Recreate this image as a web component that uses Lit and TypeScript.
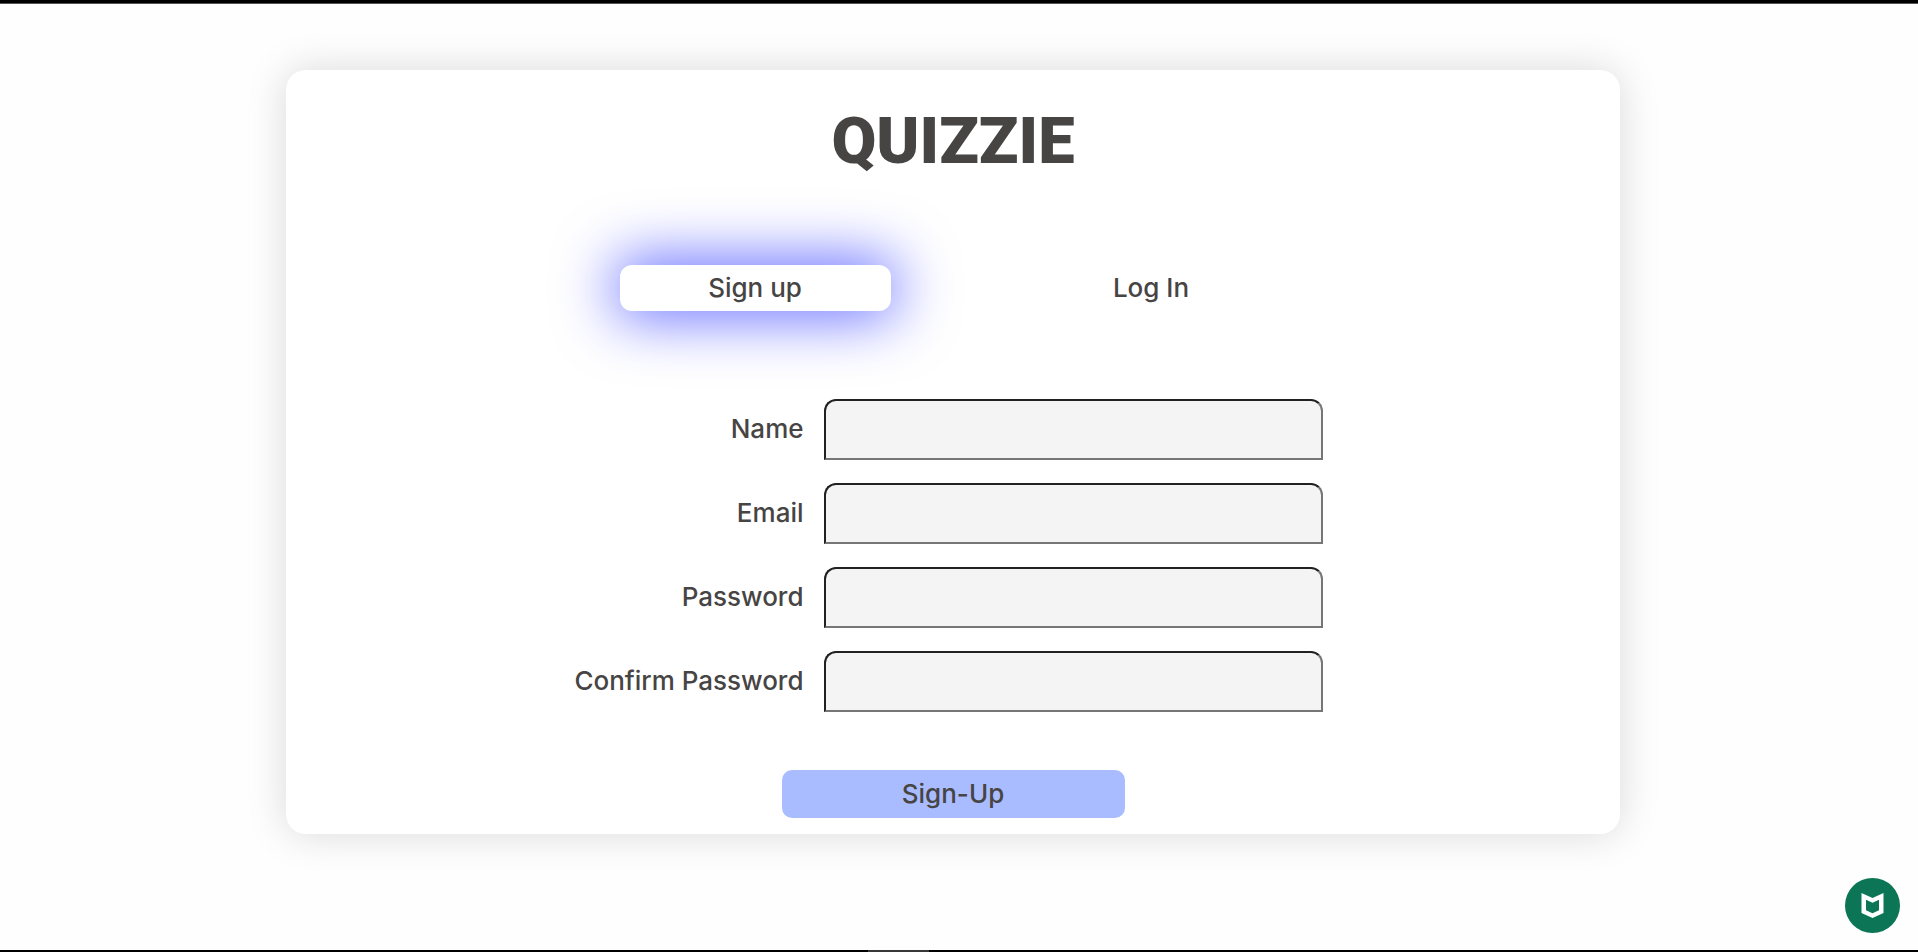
import { LitElement, html, css } from "lit";
import { customElement, state } from "lit/decorators.js";

interface Field {
  id: string;
  label: string;
  type: string;
}

const FIELDS: Field[] = [
  { id: "name", label: "Name", type: "text" },
  { id: "email", label: "Email", type: "email" },
  { id: "password", label: "Password", type: "password" },
  { id: "confirm", label: "Confirm Password", type: "password" },
];

@customElement("shield-button")
export class ShieldButton extends LitElement {
  static styles = css`
    .shield {
      display: block;
      width: 55px;
      height: 55px;
      padding: 0;
      border: 0;
      border-radius: 50%;
      background: #0b7556;
      cursor: pointer;
    }
    .shield svg {
      display: block;
      width: 55px;
      height: 55px;
    }
  `;

  render() {
    return html`
      <button class="shield" type="button" aria-label="Web protection">
        <svg viewBox="0 0 55 55" aria-hidden="true">
          <path
            fill="#fff"
            fill-rule="evenodd"
            d="M16.5 15 L27.5 20 L38.5 15 V35 L27.5 40 L16.5 35 Z M21 21.8 V32.2 L27.5 35.2 L34 32.2 V21.8 L27.5 24.8 Z"
          />
        </svg>
      </button>
    `;
  }
}

@customElement("app-root")
export class AppRoot extends LitElement {
  @state() private mode: "signup" | "login" = "signup";

  static styles = css`
    :host {
      display: flex;
      flex-direction: column;
      position: relative;
      box-sizing: border-box;
      min-height: 100vh;
      background: #fefefe;
      color: #474444;
      font-family: Inter, "Open Sans", sans-serif;
      font-size: 26px;
      font-weight: 500;
      line-height: 40px;
    }
    .top-bar {
      height: 3px;
      background: #000;
      border-bottom: 1px solid #555;
    }
    .page {
      flex: 1;
      padding: 66px 12px 0 0;
    }
    .card {
      box-sizing: border-box;
      width: 70%;
      margin: 0 auto;
      padding: 31px 16px 16px;
      display: flex;
      flex-direction: column;
      align-items: center;
      border-radius: 20px;
      background: #fff;
      box-shadow: 0 0 40px rgba(0, 0, 0, 0.15);
    }
    .title {
      margin: 0;
      font-family: Roboto, sans-serif;
      font-size: 65px;
      font-weight: 900;
      line-height: 80px;
    }
    .tabs {
      display: flex;
      gap: 125px;
      margin-top: 84px;
    }
    .tab {
      width: 271px;
      height: 46px;
      padding: 0;
      border: 0;
      border-radius: 12px;
      background: transparent;
      color: inherit;
      font: inherit;
      cursor: pointer;
    }
    .tab[aria-pressed="true"] {
      background: #fff;
      box-shadow: 0 0 60px 5px #5c64ff;
    }
    .form {
      display: flex;
      flex-direction: column;
      align-items: center;
      margin-top: 88px;
    }
    .fields {
      display: grid;
      grid-template-columns: 236px 499px;
      column-gap: 20px;
      row-gap: 23px;
      padding-right: 16px;
    }
    .label {
      align-self: center;
      padding-bottom: 2px;
      text-align: right;
      white-space: nowrap;
    }
    .input {
      box-sizing: border-box;
      width: 100%;
      height: 61px;
      padding: 0 16px;
      border: 2px inset #767676;
      border-radius: 12px 12px 0 0;
      background: #f4f4f4;
      color: inherit;
      font: inherit;
    }
    .submit {
      width: 343px;
      height: 48px;
      margin-top: 58px;
      padding: 0;
      border: 0;
      border-radius: 10px;
      background: #a9bcff;
      color: inherit;
      font: inherit;
      cursor: pointer;
    }
    .badge {
      position: absolute;
      right: 18px;
      bottom: 19px;
    }
    .bottom-bar {
      height: 2px;
      background: #000;
    }
    .handle {
      width: 61px;
      height: 2px;
      margin-left: 45.25%;
      background: #38383b;
    }
  `;

  render() {
    return html`
      <div class="top-bar"></div>
      <main class="page">
        <section class="card">
          <h1 class="title">QUIZZIE</h1>
          <div class="tabs">
            <button
              class="tab"
              type="button"
              aria-pressed=${this.mode === "signup"}
              @click=${() => (this.mode = "signup")}
            >
              Sign up
            </button>
            <button
              class="tab"
              type="button"
              aria-pressed=${this.mode === "login"}
              @click=${() => (this.mode = "login")}
            >
              Log In
            </button>
          </div>
          <form class="form" @submit=${(e: Event) => e.preventDefault()}>
            <div class="fields">
              ${FIELDS.map(
                (f) => html`
                  <label class="label" for=${f.id}>${f.label}</label>
                  <input class="input" id=${f.id} type=${f.type} />
                `
              )}
            </div>
            <button class="submit" type="submit">Sign-Up</button>
          </form>
        </section>
      </main>
      <shield-button class="badge"></shield-button>
      <div class="bottom-bar"><div class="handle"></div></div>
    `;
  }
}
